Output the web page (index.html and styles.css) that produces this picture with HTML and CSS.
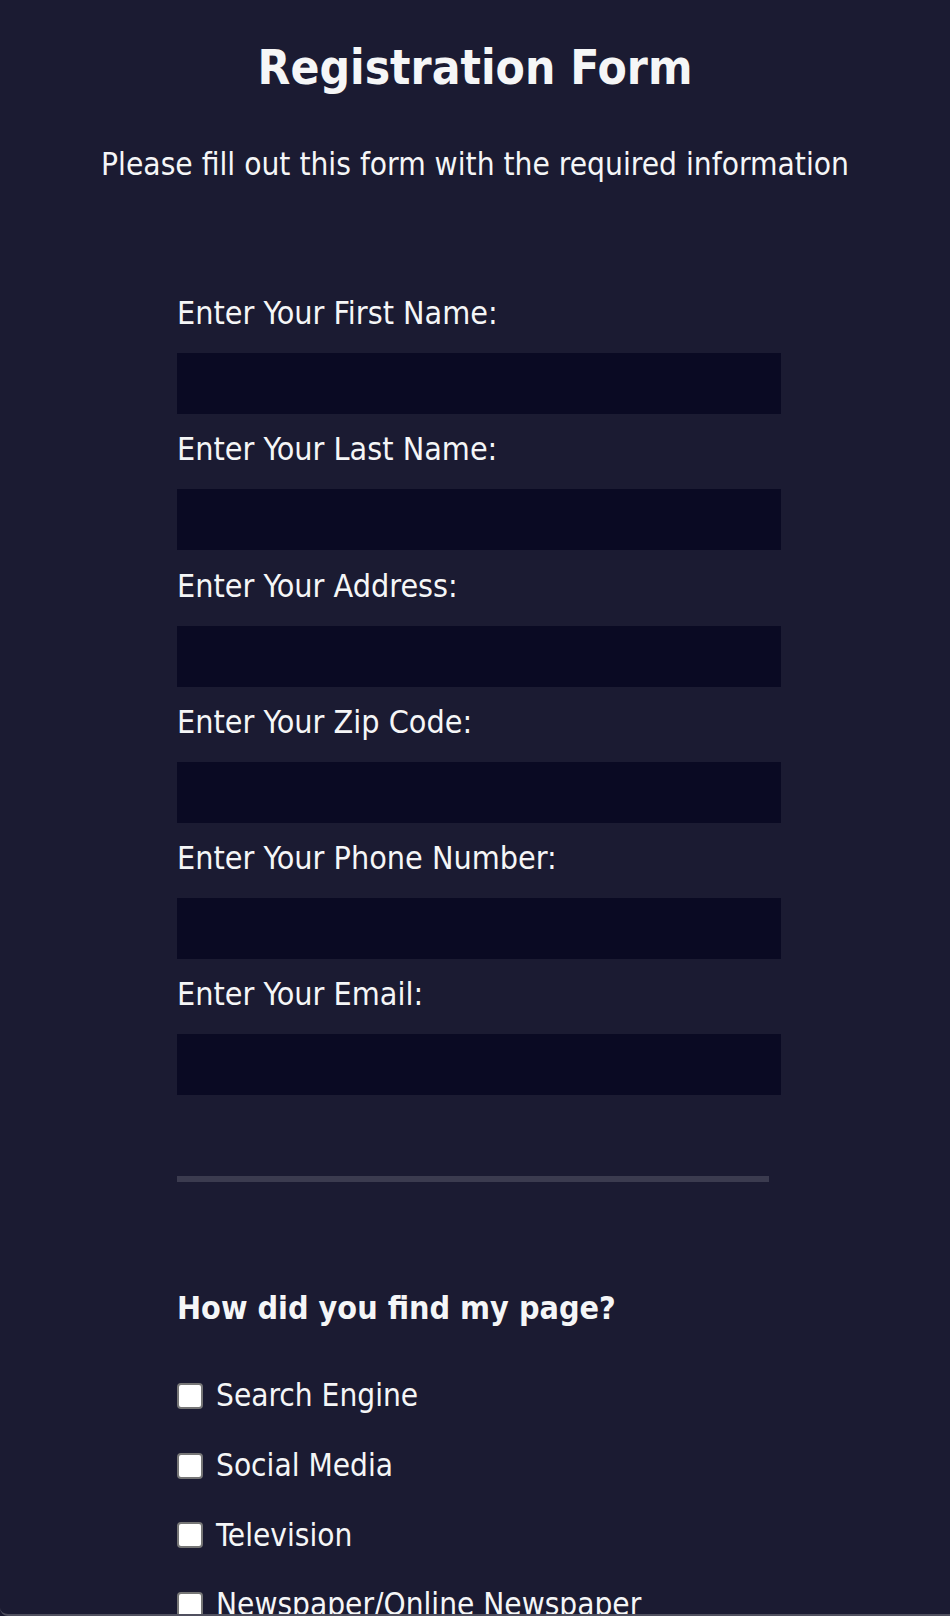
FILE: index.html
```html
<!DOCTYPE html>
<html lang="en">
<head>
<meta charset="utf-8">
<title>Registration Form</title>
<link rel="stylesheet" href="styles.css">
</head>
<body>
  <header class="header">
    <h1 class="title">Registration Form</h1>
    <p class="subtitle">Please fill out this form with the required information</p>
  </header>
  <form class="form">
    <div class="fields">
      <label class="field">Enter Your First Name:<input class="text-input" type="text"></label>
      <label class="field">Enter Your Last Name:<input class="text-input" type="text"></label>
      <label class="field">Enter Your Address:<input class="text-input" type="text"></label>
      <label class="field">Enter Your Zip Code:<input class="text-input" type="text"></label>
      <label class="field">Enter Your Phone Number:<input class="text-input" type="text"></label>
      <label class="field">Enter Your Email:<input class="text-input" type="email"></label>
    </div>
    <div class="divider"></div>
    <div class="question">
      <h2 class="question-title">How did you find my page?</h2>
      <label class="option"><input class="check" type="checkbox">Search Engine</label>
      <label class="option"><input class="check" type="checkbox">Social Media</label>
      <label class="option"><input class="check" type="checkbox">Television</label>
      <label class="option"><input class="check" type="checkbox">Newspaper/Online Newspaper</label>
    </div>
  </form>
</body>
</html>
```
FILE: styles.css
```css
html, body {
  margin: 0;
  padding: 0;
}
html {
  background-color: #1b1b32;
}
body {
  box-sizing: border-box;
  background-color: #1b1b32;
  color: #f5f6f7;
  font-family: "DejaVu Sans Condensed", "DejaVu Sans", sans-serif;
  font-stretch: condensed;
  height: 1616px;
  overflow: hidden;
  border-bottom: 2px solid #50505f;
  border-bottom-left-radius: 8px;
}
.header {
  text-align: center;
  padding-top: 40px;
}
.title {
  margin: 0;
  font-size: 47.5px;
  font-weight: bold;
  line-height: 56px;
}
.subtitle {
  margin: 50px 0 0;
  font-size: 31.4px;
  line-height: 37px;
}
.form {
  width: 604px;
  margin: 0 0 0 calc(50% - 298px);
  padding-top: 112px;
}
.fields {
  display: flex;
  flex-direction: column;
  gap: 17.3px;
}
.field {
  display: flex;
  flex-direction: column;
  gap: 21px;
  font-size: 32px;
  line-height: 37px;
}
.text-input {
  box-sizing: border-box;
  width: 604px;
  height: 61px;
  margin: 0;
  background-color: #0a0a23;
  border: 1px solid #0a0a23;
  color: #ffffff;
}
.divider {
  width: 592px;
  height: 6px;
  margin-top: 80.5px;
  background-color: #3b3b4f;
}
.question {
  padding-top: 108px;
  display: flex;
  flex-direction: column;
}
.question-title {
  margin: 0 0 34px;
  font-size: 32px;
  line-height: 37px;
  font-weight: bold;
}
.option {
  display: flex;
  align-items: center;
  gap: 13px;
  font-size: 31.3px;
  line-height: 37px;
  height: 69.7px;
}
.check {
  appearance: none;
  -webkit-appearance: none;
  box-sizing: border-box;
  width: 26px;
  height: 26px;
  margin: 0;
  flex: none;
  background-color: #ffffff;
  border: 2px solid #767676;
  border-radius: 4px;
}
```
